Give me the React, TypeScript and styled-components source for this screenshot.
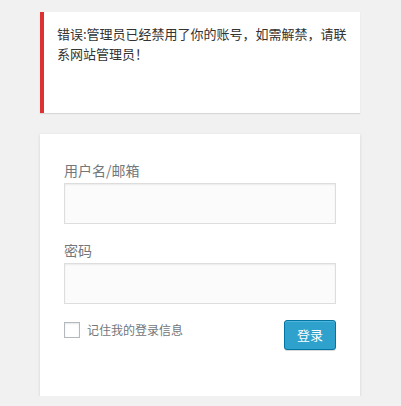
import * as React from "react";
import styled, { createGlobalStyle } from "styled-components";

const GlobalStyle = createGlobalStyle`
    html, body {
        margin: 0;
        padding: 0;
        background: #f1f1f1;
    }
    body {
        font-family: "Noto Sans CJK SC", "Noto Sans", sans-serif;
        color: #444;
    }
`;

const App: React.FC = () => {
    return (
        <>
            <GlobalStyle />
            <Login>
                <ErrorNotice>
                    错误:管理员已经禁用了你的账号，如需解禁，请联系网站管理员！
                </ErrorNotice>
                <LoginForm onSubmit={(e) => e.preventDefault()}>
                    <Field>
                        <Label htmlFor="user_login">用户名/邮箱</Label>
                        <TextInput id="user_login" type="text" />
                    </Field>
                    <Field>
                        <Label htmlFor="user_pass">密码</Label>
                        <TextInput id="user_pass" type="password" />
                    </Field>
                    <Submit>
                        <Remember>
                            <Checkbox type="checkbox" />
                            记住我的登录信息
                        </Remember>
                        <Button type="submit">登录</Button>
                    </Submit>
                </LoginForm>
            </Login>
        </>
    );
};

export default App;

const Login = styled.div`
    width: 320px;
    margin: 0 40px;
    padding-top: 12px;
`;

const ErrorNotice = styled.div`
    box-sizing: border-box;
    height: 101px;
    padding: 12px 4px 12px 13px;
    background: #fff;
    border-left: 4px solid #dc3232;
    box-shadow: 0 1px 1px 0 rgba(0, 0, 0, 0.1);
    font-size: 13px;
    line-height: 19.5px;
    color: #333;
    margin-bottom: 21px;
`;

const LoginForm = styled.form`
    margin: 0;
    padding: 26px 24px 46px;
    background: #fff;
    box-shadow: 0 1px 3px rgba(0, 0, 0, 0.13);
`;

const Field = styled.div`
    display: flex;
    flex-direction: column;
    margin-bottom: 16px;
`;

const Label = styled.label`
    font-size: 14px;
    line-height: 20px;
    color: #72777c;
`;

const TextInput = styled.input`
    box-sizing: border-box;
    width: 100%;
    height: 41px;
    margin-top: 3px;
    padding: 3px;
    font-size: 24px;
    background: #fbfbfb;
    border: 1px solid #ddd;
    box-shadow: inset 0 1px 2px rgba(0, 0, 0, 0.07);
    outline: none;
`;

const Submit = styled.div`
    display: flex;
    justify-content: space-between;
    align-items: flex-start;
`;

const Remember = styled.label`
    display: flex;
    align-items: center;
    gap: 7px;
    margin-top: 2px;
    font-size: 12px;
    line-height: 16px;
    color: #72777c;
`;

const Checkbox = styled.input`
    appearance: none;
    box-sizing: border-box;
    width: 16px;
    height: 16px;
    margin: 0;
    border: 1px solid #b4b9be;
    background: #fff;
    box-shadow: inset 0 1px 2px rgba(0, 0, 0, 0.1);
`;

const Button = styled.button`
    box-sizing: border-box;
    height: 30px;
    width: 52px;
    padding: 0 10px 2px;
    font-family: "Noto Sans CJK SC", "Noto Sans", sans-serif;
    font-size: 13px;
    line-height: 28px;
    color: #fff;
    background: #2ea2cc;
    border: 1px solid #0074a2;
    border-radius: 3px;
    box-shadow: inset 0 1px 0 rgba(120, 200, 230, 0.5), 0 1px 0 rgba(0, 0, 0, 0.15);
    cursor: pointer;
`;
